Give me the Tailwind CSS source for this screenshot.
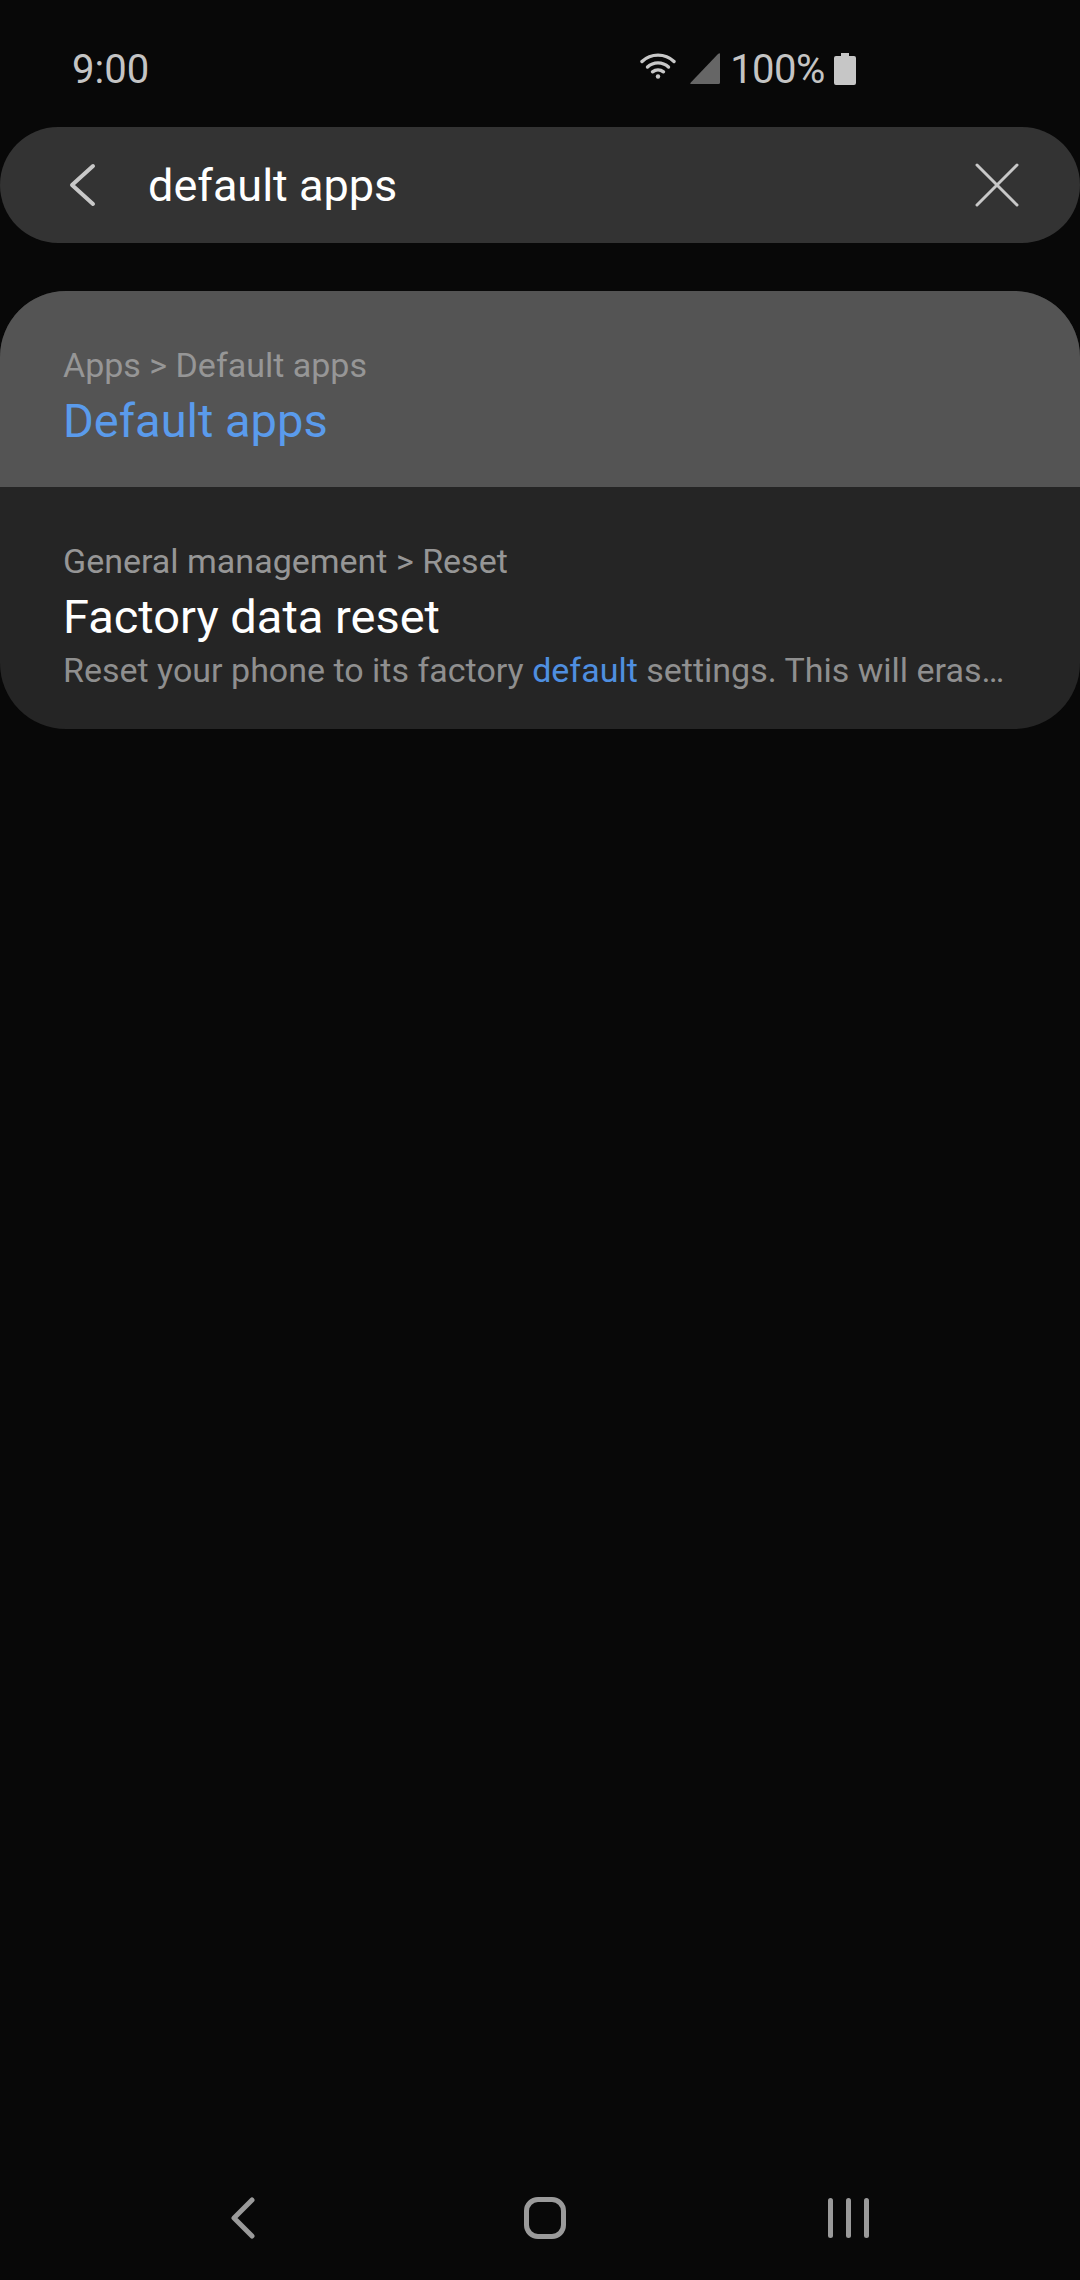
<!DOCTYPE html>
<html>
<head>
  <meta charset="utf-8">
  <title>Settings search</title>
  <script src="https://cdn.jsdelivr.net/npm/@tailwindcss/browser@4"></script>
</head>
<body class="bg-[#080808]">
<div class="w-[1080px] h-[2280px] flex flex-col bg-[#080808] font-['Roboto',sans-serif] overflow-hidden">

  <!-- status bar -->
  <div class="h-[127px] flex items-start pt-[48px] pl-[72px] shrink-0">
    <span class="text-[40px] leading-[44px] text-[#c4c4c4]">9:00</span>
    <div class="ml-[491px] flex items-start">
      <svg class="w-[36px] h-[26px] mt-[5px]" viewBox="0 0 36 26" fill="none" stroke="#c8c8c8" stroke-width="3.4" stroke-linecap="round">
        <path d="M2 8.5C11 0 25 0 34 8.5"/>
        <path d="M7.500 14C13.500 8.500 22.500 8.500 28.500 14"/>
        <path d="M12.500 18.800C15.800 16.200 20.200 16.200 23.500 18.800"/>
        <circle cx="18" cy="23.500" r="2.200" fill="#c8c8c8" stroke="none"/>
      </svg>
      <svg class="w-[32px] h-[32px] ml-[13px] mt-[5px]" viewBox="0 0 32 32">
        <path d="M31 1V29.500Q31 31 29.500 31H2.500Q0.500 31 1.800 29.500L29 1Q31 -0.500 31 1Z" fill="#666666"/>
      </svg>
      <span class="ml-[9px] text-[40px] leading-[44px] text-[#c4c4c4] tracking-[-0.5px]">100%</span>
      <svg class="w-[22px] h-[32px] ml-[9px] mt-[5px]" viewBox="0 0 22 32">
        <path d="M7 0H15V3H20Q22 3 22 5V30Q22 32 20 32H2Q0 32 0 30V5Q0 3 2 3H7Z" fill="#c6c6c6"/>
      </svg>
    </div>
  </div>

  <!-- search bar -->
  <div class="h-[116px] rounded-[58px] bg-[#333333] flex items-center pl-[68px] pr-[60px] shrink-0">
    <svg class="w-[28px] h-[44px] shrink-0" viewBox="0 0 28 44" fill="none" stroke="#c8c8c8" stroke-width="4" stroke-linecap="round" stroke-linejoin="round">
      <path d="M25 3L4 22L25 41"/>
    </svg>
    <span class="ml-[52px] text-[45px] leading-[56px] pt-[2px] text-white">default apps</span>
    <svg class="w-[46px] h-[46px] ml-auto shrink-0" viewBox="0 0 46 46" fill="none" stroke="#c8c8c8" stroke-width="3" stroke-linecap="round">
      <path d="M3 3L43 43M43 3L3 43"/>
    </svg>
  </div>

  <!-- results -->
  <div class="mt-[48px] h-[438px] rounded-[66px] overflow-hidden bg-[#252525] shrink-0">
    <div class="h-[196px] bg-[#545454] pl-[63px] pt-[54px]">
      <div class="text-[34px] leading-[40px] text-[#969696]">Apps &gt; Default apps</div>
      <div class="mt-[8px] text-[47px] leading-[56px] text-[#5a9bec]">Default apps</div>
    </div>
    <div class="pl-[63px] pt-[54px]">
      <div class="text-[34px] leading-[40px] text-[#969696]">General management &gt; Reset</div>
      <div class="mt-[8px] text-[47px] leading-[56px] text-white">Factory data reset</div>
      <div class="mt-[5px] text-[34px] leading-[40px] text-[#8f8f8f] whitespace-nowrap">Reset your phone to its factory <span class="text-[#4f8fe0]">default</span> settings. This will eras…</div>
    </div>
  </div>

  <!-- nav bar -->
  <div class="mt-auto h-[82px] mb-[21px] flex items-center pl-[231px] shrink-0">
    <svg class="w-[24px] h-[42px]" viewBox="0 0 24 42" fill="none" stroke="#9a9a9a" stroke-width="5" stroke-linecap="round" stroke-linejoin="round">
      <path d="M21 3L3 21L21 39"/>
    </svg>
    <div class="ml-[269px] w-[42px] h-[42px] rounded-[14px] border-[5px] border-[#9a9a9a]"></div>
    <div class="ml-[262px] flex gap-[13px]">
      <div class="w-[5px] h-[40px] rounded-full bg-[#9a9a9a]"></div>
      <div class="w-[5px] h-[40px] rounded-full bg-[#9a9a9a]"></div>
      <div class="w-[5px] h-[40px] rounded-full bg-[#9a9a9a]"></div>
    </div>
  </div>
</div>
</body>
</html>
